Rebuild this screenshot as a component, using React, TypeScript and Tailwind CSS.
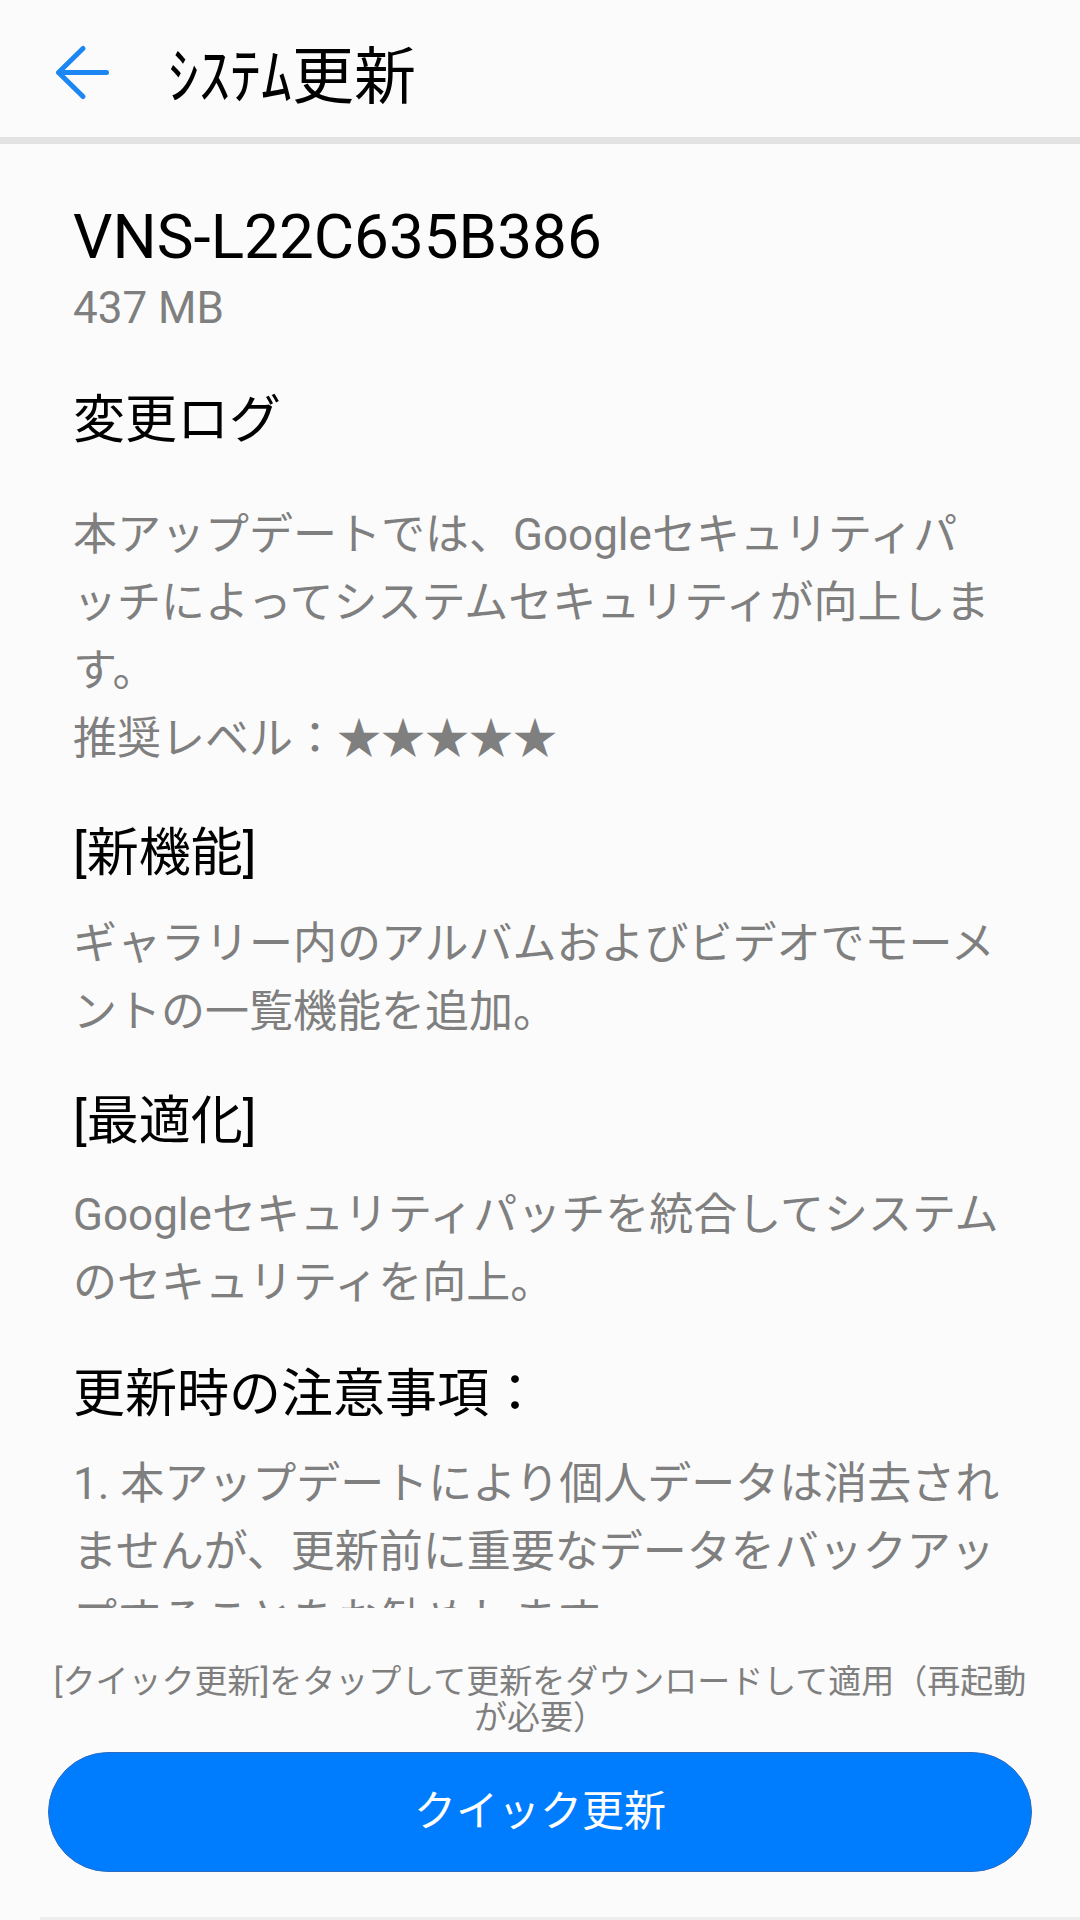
import React from 'react'

const CJK = "font-['Roboto','Noto_Sans_CJK_JP',sans-serif]"

function BackArrow() {
  return (
    <svg width="60" height="60" viewBox="0 0 60 60" fill="none" className="shrink-0">
      <path
        d="M6.5 30.5H54.5M31 6.5L6.5 30.5L31 54.5"
        stroke="#1c86f2"
        strokeWidth="5"
        strokeLinecap="round"
        strokeLinejoin="round"
      />
    </svg>
  )
}

function Heading({ children, className }: { children: React.ReactNode; className?: string }) {
  return (
    <h2 className={`text-[52px] leading-[68px] font-normal text-black whitespace-nowrap ${className ?? ''}`}>
      {children}
    </h2>
  )
}

function Body({ children, className }: { children: React.ReactNode; className?: string }) {
  return (
    <p className={`text-[44px] leading-[68px] text-[#7f7f7f] whitespace-nowrap ${className ?? ''}`}>
      {children}
    </p>
  )
}

export default function App() {
  return (
    <div className={`w-[1080px] h-[1920px] bg-[#fbfbfb] flex flex-col overflow-hidden ${CJK}`}>
      {/* Title bar */}
      <header className="h-[144px] shrink-0 pt-[7px] pl-[52px] flex items-center border-b-[7px] border-[#e2e2e2]">
        <BackArrow />
        <h1 className="ml-[56px] text-[62px] leading-none text-black font-['Noto_Sans_CJK_JP',sans-serif]">
          ｼｽﾃﾑ更新
        </h1>
      </header>

      <div className="h-[1464px] shrink-0 overflow-hidden px-[73px] pt-[57px]">
        <div className="text-[62px] leading-[72px] text-black font-['Roboto',sans-serif]">
          VNS-L22C635B386
        </div>
        <div className="mt-[9px] text-[44px] leading-[52px] text-[#7f7f7f] font-['Roboto',sans-serif]">
          437 MB
        </div>

        <Heading className="mt-[53px]">変更ログ</Heading>
        <Body className="mt-[46px]">
          本アップデートでは、Googleセキュリティパ
          <br />
          ッチによってシステムセキュリティが向上しま
          <br />
          す。
          <br />
          推奨レベル：★★★★★
        </Body>

        <Heading className="mt-[47px]">[新機能]</Heading>
        <Body className="mt-[22px]">
          ギャラリー内のアルバムおよびビデオでモーメ
          <br />
          ントの一覧機能を追加。
        </Body>

        <Heading className="mt-[42px]">[最適化]</Heading>
        <Body className="mt-[25px]">
          Googleセキュリティパッチを統合してシステム
          <br />
          のセキュリティを向上。
        </Body>

        <Heading className="mt-[44px]">更新時の注意事項：</Heading>
        <Body className="mt-[21px]">
          1. 本アップデートにより個人データは消去され
          <br />
          ませんが、更新前に重要なデータをバックアッ
          <br />
          プすることをお勧めします。
        </Body>
      </div>

      {/* Footer */}
      <p className="mt-[56px] text-center text-[33px] leading-[36px] text-[#7f7f7f] whitespace-nowrap">
        [クイック更新]をタップして更新をダウンロードして適用（再起動
        <br />
        が必要）
      </p>
      <button
        type="button"
        className="mt-[16px] mx-[48px] h-[120px] shrink-0 rounded-full bg-[#007dff] border border-[#2b6cc4] text-white text-[42px] leading-none"
      >
        クイック更新
      </button>
      <div className="mt-[45px] ml-[40px] h-[3px] shrink-0 bg-[#eeeeee]" />
    </div>
  )
}
